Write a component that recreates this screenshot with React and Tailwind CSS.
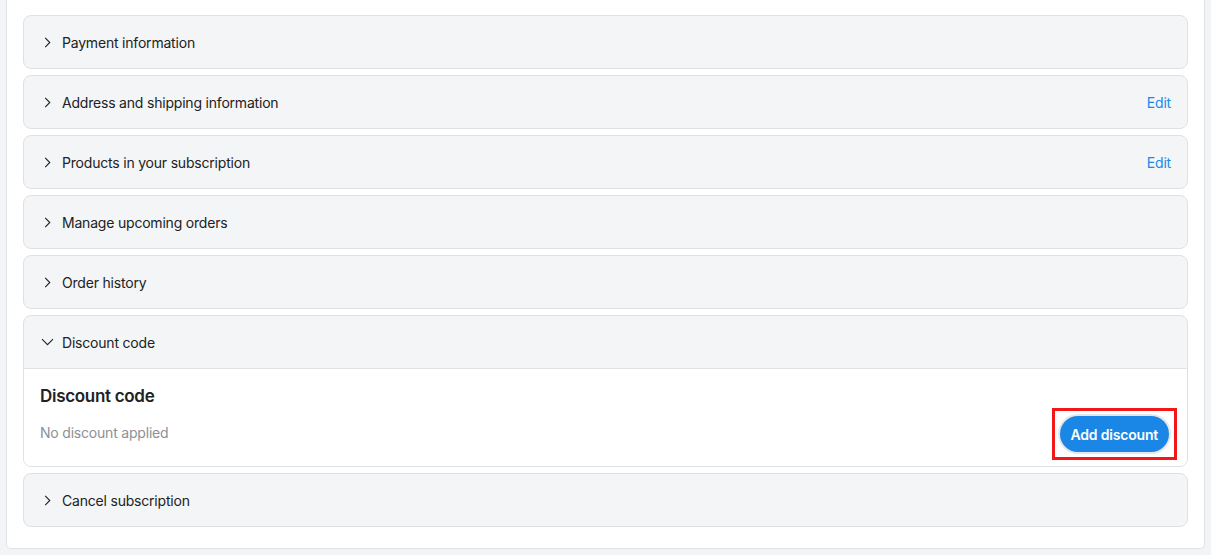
import { useState } from "react";

const sections = [
  { id: "payment", title: "Payment information" },
  { id: "address", title: "Address and shipping information", edit: true },
  { id: "products", title: "Products in your subscription", edit: true },
  { id: "upcoming", title: "Manage upcoming orders" },
  { id: "history", title: "Order history" },
  { id: "discount", title: "Discount code" },
  { id: "cancel", title: "Cancel subscription" },
];

const Chevron = ({ open }) => (
  <span className="flex h-[18px] w-[18px] items-center justify-center">
    {open ? (
      <svg width="13" height="8" viewBox="0 0 13 8" fill="none">
        <path d="M1 1.2l5.5 5.5L12 1.2" stroke="#202223" strokeWidth="1.1" />
      </svg>
    ) : (
      <svg width="7" height="11" viewBox="0 0 7 11" fill="none">
        <path d="M1.2 0.8l4.6 4.7-4.6 4.7" stroke="#202223" strokeWidth="1.1" />
      </svg>
    )}
  </span>
);

const DiscountBody = () => (
  <div className="flex items-end justify-between border-t border-[#dfe1e4] bg-white pl-4 pr-[10px] pb-[6px]">
    <div className="pt-[15px] pb-[17px]">
      <h3 className="text-[17px] font-semibold leading-[24px] tracking-[-0.3px] text-[#202223]">
        Discount code
      </h3>
      <p className="mt-[15px] text-[14px] leading-[20px] tracking-[-0.2px] text-[#8c9196]">
        No discount applied
      </p>
    </div>
    <div className="border-[3px] border-[#f01818] p-[5px]">
      <button className="block h-[36px] rounded-full bg-[#1a86e6] px-[11px] text-[14px] font-semibold tracking-[-0.2px] text-white ring-2 ring-[#e6e7ea]">
        Add discount
      </button>
    </div>
  </div>
);

export default function App() {
  const [open, setOpen] = useState("discount");

  return (
    <div
      className="min-h-[555px] bg-[#f3f4f6] px-[6px] pb-[5px]"
      style={{ fontFamily: "Inter, 'Liberation Sans', sans-serif" }}
    >
      <div className="rounded-b-[5px] border-x border-b border-[#e1e3e6] bg-white px-4 pt-[15px] pb-[21px]">
        <div className="flex flex-col gap-[6px]">
          {sections.map((s) => {
            const isOpen = open === s.id;
            return (
              <div
                key={s.id}
                className="overflow-hidden rounded-[8px] border border-[#dfe1e4] bg-[#f4f5f7]"
              >
                <div
                  className="flex h-[52px] cursor-pointer items-center justify-between pl-[14px] pr-4"
                  onClick={() => setOpen(isOpen ? null : s.id)}
                >
                  <div className="flex items-center gap-[6px]">
                    <Chevron open={isOpen} />
                    <span className="text-[14px] tracking-[-0.2px] text-[#202223]">
                      {s.title}
                    </span>
                  </div>
                  {s.edit && (
                    <button className="text-[14px] tracking-[-0.2px] text-[#1a8ae8]">
                      Edit
                    </button>
                  )}
                </div>
                {isOpen && s.id === "discount" && <DiscountBody />}
              </div>
            );
          })}
        </div>
      </div>
    </div>
  );
}
